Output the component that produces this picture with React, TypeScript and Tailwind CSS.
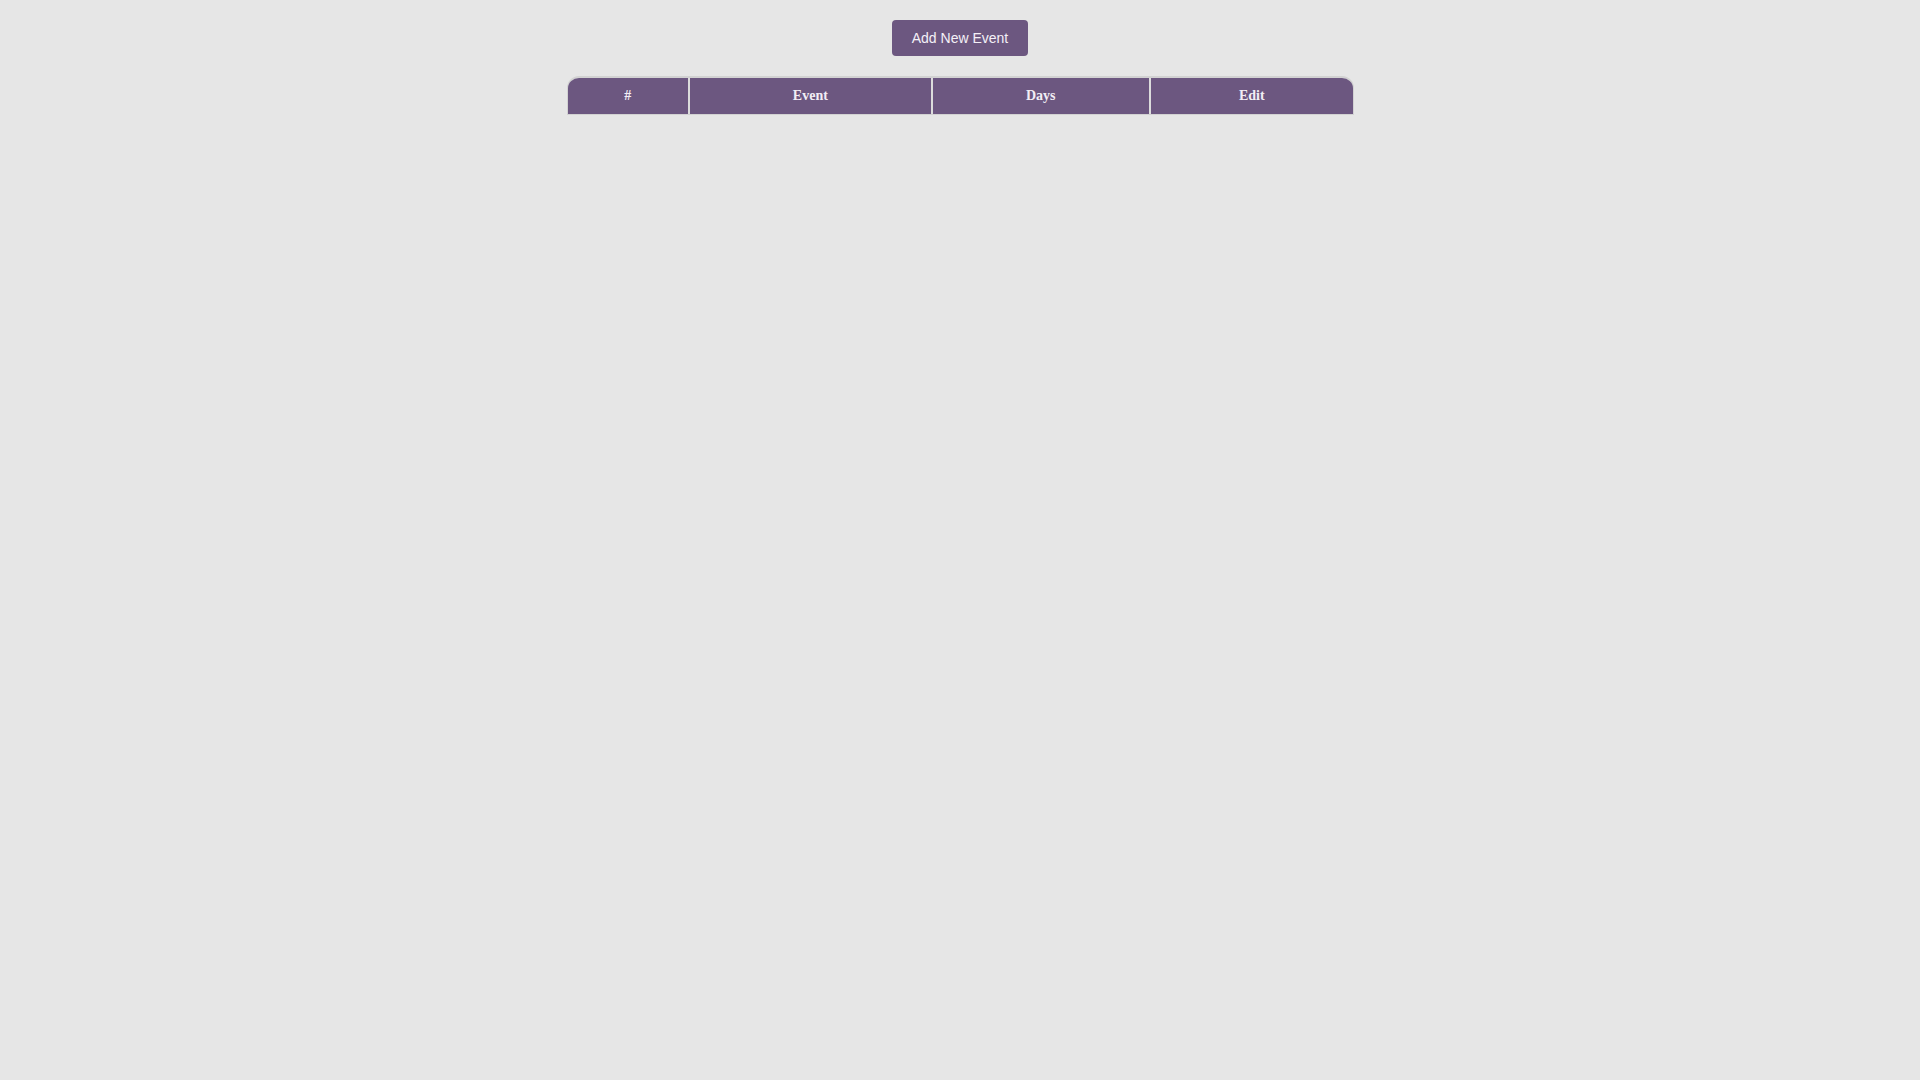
export default function App() {
  const cols = [
    { label: '#', width: 'w-[121px]' },
    { label: 'Event', width: 'w-[243px]' },
    { label: 'Days', width: 'w-[219px]' },
    { label: 'Edit', width: 'w-[204px]' },
  ];

  return (
    <div className="min-h-screen bg-[#e6e6e6] pt-5">
      <div className="flex justify-center">
        <button className="h-9 rounded bg-[#6c5780] px-5 font-['Liberation_Sans',Arial,sans-serif] text-sm text-[#f4f0f7]">
          Add New Event
        </button>
      </div>

      {/* events table */}
      <div className="mt-5 flex justify-center">
        <table className="w-[787px] border-separate border-spacing-0 overflow-hidden rounded-t-xl border-t-2 border-l border-r border-b border-[#d2d2d2] font-['Liberation_Serif','Times_New_Roman',serif]">
          <thead>
            <tr>
              {cols.map((c, i) => (
                <th
                  key={c.label}
                  className={`${c.width} h-9 bg-[#6c5780] text-center text-sm font-bold text-[#f2eef5] ${
                    i > 0 ? 'border-l-2 border-[#dcdcdc]' : ''
                  }`}
                >
                  {c.label}
                </th>
              ))}
            </tr>
          </thead>
          <tbody />
        </table>
      </div>
    </div>
  );
}
